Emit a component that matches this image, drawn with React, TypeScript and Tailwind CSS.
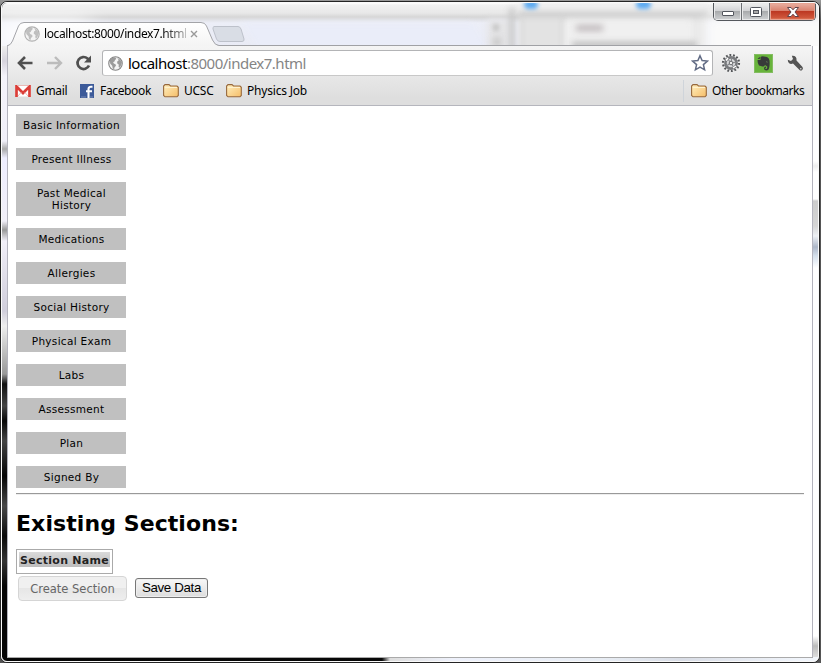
import React from "react";

const sections = [
  "Basic Information", "Present Illness", "Past Medical History", "Medications", "Allergies",
  "Social History", "Physical Exam", "Labs", "Assessment", "Plan", "Signed By",
];

function Globe({ className, color }: { className: string; color: string }) {
  return (
    <svg viewBox="0 0 16 16" className={className}>
      <circle cx="8" cy="8" r="7.2" fill="#f4f4f4" stroke={color} strokeWidth="1.2" />
      <path d="M2 4.5 5 1.7 8 1.5 8.8 3 7.4 4.4 6.7 6 5.4 6.4 6.2 8 8.2 9 8.5 10.5 7 12 6.4 14.3 5 13 4.5 10.3 2.3 8Z M10 2 13.2 4 14.7 7.2 13.5 11 12 12.8 11.2 11 11.6 9.2 9.7 7.6 10 5.6 11.5 4.5Z" fill={color} opacity=".8" />
    </svg>
  );
}

function Folder() {
  return (
    <svg width="16" height="16" viewBox="0 0 16 16" className="shrink-0">
      <defs>
        <linearGradient id="folder" x1="0" y1="0" x2="1" y2="1">
          <stop stopColor="#fff0c0" /><stop offset="1" stopColor="#f5bd68" />
        </linearGradient>
      </defs>
      <path d="M.6 12.500V3L2 1.600h4L7.500 3H14l1.300 1.300v8.200L14 13.800H2Z" fill="url(#folder)" stroke="#97683c" strokeWidth="1.1" />
      <path d="M1.800 4.500h12.300" stroke="#fff2cf" strokeWidth="1" />
    </svg>
  );
}

function TitleBar() {
  return (
    <div className="relative flex h-[43px] shrink-0 overflow-hidden bg-[linear-gradient(to_bottom,#fff_0,#f1f1f1_2px,#e8e8e8_10px,#d6d6d6_14px,#eceef7_20px,#e9ebf5_43px)]">
      <div className="absolute -left-2 top-4 h-8 w-24 bg-white blur-md" />
      <div className="absolute left-[250px] top-[20px] h-[30px] w-[230px] skew-x-[30deg] bg-[#eaedf9] blur-[3px]" />
      <div className="absolute left-[485px] top-[16px] h-[40px] w-[25px] bg-[#e6e6e8] blur-[3px]" />
      <div className="absolute left-[491px] top-[21px] h-[7px] w-[6px] bg-[#c4c4c4] blur-[2px]" />
      <div className="absolute left-[491px] top-[34px] h-[10px] w-[8px] bg-[#c8c8c8] blur-[3px]" />
      <div className="absolute left-[507px] top-[5px] h-[45px] w-[6px] bg-[#c9c9c9] blur-[3px]" />
      <div className="absolute left-[516px] top-0 h-[45px] w-[190px] bg-[linear-gradient(to_bottom,#eee_5px,#cecece_12px,#eaeaea_19px)] blur-[2px]" />
      <div className="absolute left-[519px] top-[14px] h-[40px] w-[42px] border-2 border-[#d2d2d2] bg-[#e3e3e3] blur-[2px]" />
      <div className="absolute left-[564px] top-[17px] h-[40px] w-[126px] bg-[#f0f0f0] blur-[3px]" />
      <div className="absolute left-[522px] top-[-3px] h-[9px] w-[14px] rounded-full bg-[#5daaf0] blur-[2px]" />
      <div className="absolute left-[634px] top-[-3px] h-[9px] w-[15px] rounded-full bg-[#5daaf0] blur-[2px]" />
      <div className="absolute left-[574px] top-[22px] h-[6px] w-[27px] bg-[#bdb6b9] blur-[3px]" />
      <div className="absolute left-[570px] top-[39px] h-[6px] w-[125px] bg-[#b8b8b8] blur-[3px]" />
      <div className="absolute left-[704px] top-[14px] h-[40px] w-[140px] bg-[#fafafa] blur-[6px]" />
      <div className="absolute bottom-0 left-[5px] right-[7px] h-px bg-[#a0a1a5]" />
      <div className="relative mt-[18px] flex h-[25px] w-[211px] items-center pl-[22px]">
        <svg width="218" height="25" viewBox="0 0 218 25" className="absolute left-0 top-0">
          <defs><linearGradient id="tab" x1="0" y1="0" x2="0" y2="1"><stop stopColor="#fff" /><stop offset="1" stopColor="#f4f4f4" /></linearGradient></defs>
          <path d="M5 25Q9 24 10.5 20L16.5 5Q18 1.5 22 1.5H199Q203 1.5 204.5 5L210.5 19Q213 24.5 217 24.5V25Z" fill="url(#tab)" />
          <path d="M5 25Q9 24 10.5 20L16.5 5Q18 1.5 22 1.5H199Q203 1.5 204.5 5L210.5 19Q213 24.5 217 24.5" fill="none" stroke="#a3a4a8" />
        </svg>
        <Globe className="relative h-4 w-4 shrink-0" color="#b2b2b2" />
        <span className="relative ml-[4px] w-[142px] overflow-hidden whitespace-nowrap bg-[linear-gradient(to_right,#000_118px,#aaa_142px)] bg-clip-text font-['Noto_Sans','Open_Sans',sans-serif] text-[12px] leading-[18px] tracking-[-0.38px] text-transparent">localhost:8000/index7.html</span>
        <svg width="8" height="8" viewBox="0 0 8 8" className="relative ml-[4px] shrink-0"><path d="m1 1 6 6M7 1 1 7" stroke="#999" strokeWidth="1.4" /></svg>
      </div>
      <svg width="33" height="18" viewBox="0 0 33 18" className="relative mt-[22px] -ml-px"><path d="M2 1.5H26Q28 1.5 29 4L32 14Q32.500 16.500 30 16.500H8Q5.500 16.500 4.500 14L1 4Q.5 2 2 1.500Z" fill="#d9dde5" stroke="#bdc1ca" /></svg>
      <div className="relative ml-auto mr-[2px] flex h-[18px] w-[103px] overflow-hidden rounded-b-[5px] border border-t-0 border-[#55585d]">
        {["min", "max"].map((kind) => (
          <div key={kind} className="flex w-[28px] items-center justify-center border-r border-[#6b6e72] bg-[linear-gradient(to_bottom,#efefef_0,#d2d3d5_45%,#a9abad_50%,#cfd1d3)] shadow-[inset_0_0_0_1px_#e9eaeb]">
            {kind === "min" ? <div className="mt-1 h-[5px] w-[12px] rounded-[1px] border border-[#53565e] bg-white" /> :
              <svg width="12" height="10" viewBox="0 0 12 10"><rect x=".5" y=".5" width="11" height="9" rx="1" fill="#fff" stroke="#53565e" /><rect x="3.5" y="3.500" width="5" height="3" fill="#aaa" stroke="#53565e" /></svg>}
          </div>
        ))}
        <div className="flex flex-1 items-center justify-center bg-[linear-gradient(to_bottom,#eab0a2_0,#d98370_45%,#bd3923_50%,#ce553a_85%,#e58767)] shadow-[inset_0_0_0_1px_#e7a493]">
          <svg width="12" height="10" viewBox="0 0 12 10"><path d="M.5.500H4L6 2.800 8 .500h3.500L8 5l3.500 4.500H8L6 7.200 4 9.500H.5L4 5Z" fill="#fff" stroke="#60434a" /></svg>
        </div>
      </div>
    </div>
  );
}

function Gear() {
  return (
    <svg width="20" height="20" viewBox="0 0 20 20" className="ml-[8px] shrink-0">
      <circle cx="10" cy="10" r="8" fill="none" stroke="#55575a" strokeWidth="2.2" strokeDasharray="1.8 1.790" />
      <circle cx="10" cy="10" r="5.6" fill="#d6d7d9" stroke="#77797c" strokeWidth="2.6" />
      <path d="m10 10 1-6m-1 6 6-1m-6 1 3 5m-3-5-5 3m5-3-4-5" stroke="#85878a" strokeWidth="1.1" />
      <path d="M5 7.500 7 5M12 15l3-2" stroke="#fff" strokeWidth="1.5" />
      <circle cx="10" cy="10" r="1.8" fill="#eee" stroke="#6b6d70" />
    </svg>
  );
}

function Toolbar() {
  return (
    <div className="h-[60px] shrink-0 border-b border-[#b5b6bd] bg-[linear-gradient(to_bottom,#f5f5f5,#dedede_52px,#dedede)] font-['Noto_Sans','Open_Sans',sans-serif] text-black">
      <div className="flex h-[34px] items-center">
        <svg width="76" height="20" viewBox="0 0 76 20" className="ml-[9px] shrink-0" fill="none">
          <path d="M15.500 10H2M8 4 2 10l6 6" stroke="#505050" strokeWidth="2.6" />
          <path d="M30 10h13.500M38 4l6 6-6 6" stroke="#bcbcbc" strokeWidth="2.400" />
          <path d="M72 12.500A6 6 0 1 1 70.500 5.500L72 7" stroke="#505050" strokeWidth="2.700" />
          <path d="M74 2.500V9.500H67Z" fill="#505050" />
        </svg>
        <div className="ml-[9px] flex h-[26px] w-[611px] shrink-0 items-center rounded-[3px] border border-[#b3b4b6] border-b-[#c8c8c8] bg-white pl-[5px]">
          <Globe className="h-[15px] w-[15px] shrink-0" color="#858585" />
          <span className="ml-[5px] whitespace-nowrap text-[15px] leading-[22px] tracking-[-0.5px]">localhost<span className="text-[#858585]">:8000/index7.html</span></span>
          <svg width="18" height="18" viewBox="0 0 18 18" className="ml-auto mr-[3px]"><path d="m9 1.700 2.100 4.900 5.300.5-4 3.500 1.200 5.200L9 13.100l-4.600 2.700 1.200-5.200-4-3.500 5.300-.5Z" fill="#fff" stroke="#626c85" strokeWidth="1.500" /></svg>
        </div>
        <Gear />
        <svg width="19" height="19" viewBox="0 0 19 19" className="ml-[13px] shrink-0">
          <rect width="19" height="19" rx="1" fill="#68b43c" /><rect x=".5" y=".5" width="18" height="18" fill="none" stroke="#83bd60" />
          <path d="M3.500 6h3V3Q8 2 10 2.500L13 3Q15 3.500 15.500 6.500 16 11 15 14.500 14.500 16.500 12.500 16.500 10 16.500 10 14.500 10 12.500 12 12.500v1.300q-1 0-.8.800.3.700 1.300.4 1-.5.700-2.500L11 11Q10 13 8.500 12.500L5 11.500Q3.500 10 3.500 6Z" fill="#373b39" />
          <path d="M3.500 5 5.800 2.700V5Z" fill="#373b39" /><path d="M11.800 8q1.200-1.200 2 .5Z" fill="#7fa66c" />
        </svg>
        <svg width="17" height="17" viewBox="0 0 17 17" className="ml-[14px] shrink-0"><path d="M.8 4.800 4 6l2-2L4.800.8C8 .3 10 2.300 9.500 5.500l6 6.500q1.200 2-.5 3.300-1.500.8-2.700-.6L6 8.600C3.500 10 .5 8 .8 4.800Z" fill="#555" /><circle cx="13.800" cy="13.800" r=".8" fill="#ddd" /></svg>
      </div>
      <div className="flex h-[22px] items-center text-[12px] leading-[18px]">
        <svg width="16" height="12" viewBox="0 0 16 12" className="ml-[7px] shrink-0"><path d="M0 .5h16v11H0Z" fill="#fff" /><path d="M1.500 12V1.500L8 8l6.500-6.500V12" fill="none" stroke="#db3e38" strokeWidth="2.700" /><path d="M2 .5h12M3 11l3.500-4M13 11 9.500 7" stroke="#e7a09c" strokeWidth=".7" fill="none" /></svg>
        <span className="ml-[5px] w-[44px] tracking-[-0.35px]">Gmail</span>
        <svg width="14" height="14" viewBox="0 0 14 14" className="shrink-0"><rect width="14" height="14" fill="#3c5a99" /><path d="M12.500 2.800H11q-2.500 0-2.500 2.500V14M6 7.300h6" stroke="#fff" strokeWidth="2.100" fill="none" /><path d="M1 13h5M10 13h3" stroke="#7489b6" /></svg>
        <span className="ml-[6px] w-[63px] tracking-[-0.35px]">Facebook</span>
        <Folder /><span className="ml-[5px] w-[42px] tracking-[-0.25px]">UCSC</span>
        <Folder /><span className="ml-[5px] whitespace-nowrap tracking-[-0.2px]">Physics Job</span>
        <div className="ml-auto flex h-[22px] items-center border-l border-[#cfd4da] pl-[7px] pr-[8px]">
          <Folder /><span className="ml-[5px] w-[92px] whitespace-nowrap tracking-[-0.47px]">Other bookmarks</span>
        </div>
      </div>
    </div>
  );
}

function Page() {
  return (
    <main className="min-h-0 flex-1 bg-white px-[8px] pt-[8px] font-['DejaVu_Sans',sans-serif] text-black">
      <div className="flex w-[110px] flex-col gap-[12px]">
        {sections.map((name) => (
          <div key={name} className="whitespace-nowrap bg-[#c0c0c0] py-[5px] pl-px text-center text-[10.500px] leading-[12px] tracking-[0.3px]">{name === "Past Medical History" ? <>Past Medical<br />History</> : name}</div>
        ))}
      </div>
      <div className="mt-[5px] h-[2px] border-b border-t border-b-[#eee] border-t-[#999]" />
      <h1 className="mt-[14px] h-[30px] whitespace-nowrap text-[22px] font-bold leading-[30px] tracking-[0.08px]">Existing Sections:</h1>
      <div className="mt-[10px] h-[25px] w-[97px] border border-[#aaa] p-[2px]">
        <div className="h-[15px] whitespace-nowrap bg-[linear-gradient(to_bottom,#dadada,#bdbdbd)] text-center text-[11px] font-bold leading-[17px] tracking-[0.28px] text-[#222]">Section Name</div>
      </div>
      <div className="mt-[2px] flex items-start pl-[2px]">
        <button className="h-[25px] w-[109px] whitespace-nowrap rounded-[4px] border border-[#d5d5d5] bg-[linear-gradient(to_bottom,#f0f0f0_50%,#e6e6e6_50%,#eee)] text-[11.500px] leading-[24px] text-[#666]">Create Section</button>
        <button className="ml-[8px] mt-[2px] h-[20px] w-[73px] whitespace-nowrap rounded-[3px] border border-[#777] bg-[linear-gradient(to_bottom,#f8f8f8,#ddd)] font-['Liberation_Sans',Arial,sans-serif] text-[13.333px] leading-[18px] tracking-[-0.35px] shadow-[inset_0_0_0_1px_#eee]">Save Data</button>
      </div>
    </main>
  );
}

export default function App() {
  return (
    <div className="flex h-[663px] w-[821px] overflow-hidden bg-[linear-gradient(to_bottom,#999_0,#555_20px,#555)] pt-px">
      <div className="flex h-[662px] w-[820px] flex-col rounded-[7px] border border-[#242424] bg-[#eef0f6]">
        <div className="flex min-h-0 flex-1 flex-col overflow-hidden rounded-[6px] border border-[#fafafa] bg-[linear-gradient(to_right,#060606_0,#080808_380px,#ddd_388px,#eef1fb_450px,#e8edf4_600px,#d9dde6_680px,#f1f5fb_800px)]">
          <TitleBar />
          <div className="flex min-h-0 flex-1">
            <div className="w-[5px] shrink-0 bg-[linear-gradient(to_bottom,#eee_0,#d7d4dd_15px,#f4f3fa_30px,#f0eff8_95px,#aaa_103px,#eef_112px,#f1eff8_175px,#999_184px,#f1eff8_195px,#d0cedb_265px,#eee_280px,#999_328px,#111_338px,#444_360px,#080808_375px,#444_395px,#050505_430px,#484848_460px,#0a0a0a_490px,#333_515px,#050505_540px)]" />
            <div className="flex min-h-0 min-w-0 flex-1 flex-col border-l border-r border-[#b3b3bd]"><Toolbar /><Page /></div>
            <div className="w-[5px] shrink-0 bg-[linear-gradient(to_bottom,#fff_115px,#eee_120px,#fff_126px,#fff_153px,#ccc_155px,#d5d5d5_180px,#edf0f4_190px,#adb7c8_201px,#d5e0ec_210px,#fff_222px,#fff_590px,#bbb_600px,#ddd)]" />
          </div>
          <div className="mx-[5px] mb-[3px] h-px shrink-0 bg-[#aaa]" />
        </div>
      </div>
    </div>
  );
}
